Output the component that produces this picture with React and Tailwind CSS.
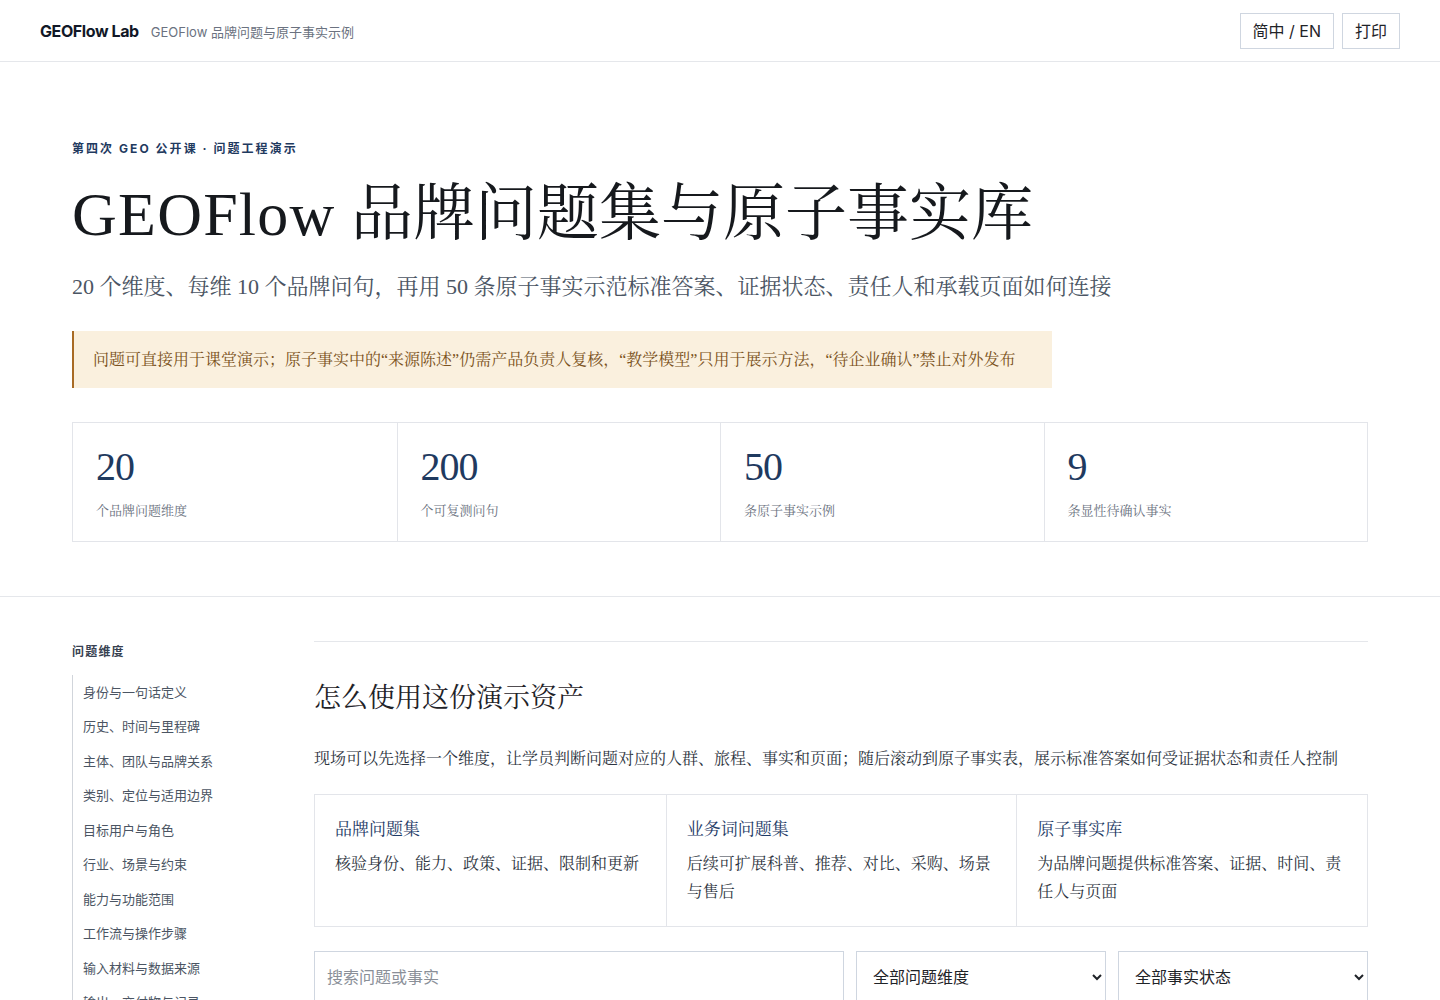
import React, { useState } from "react";

const serif = "font-['Liberation_Serif','Noto_Serif_CJK_SC','Noto_Sans_CJK_SC',serif]";
const sans = "font-['Inter','Noto_Sans_CJK_SC',sans-serif]";

const stats = [
  { value: "20", label: "个品牌问题维度" },
  { value: "200", label: "个可复测问句" },
  { value: "50", label: "条原子事实示例" },
  { value: "9", label: "条显性待确认事实" },
];

const dimensions = [
  "身份与一句话定义",
  "历史、时间与里程碑",
  "主体、团队与品牌关系",
  "类别、定位与适用边界",
  "目标用户与角色",
  "行业、场景与约束",
  "能力与功能范围",
  "工作流与操作步骤",
  "输入材料与数据来源",
  "输出、交付物与记录",
];

const assets = [
  { title: "品牌问题集", text: "核验身份、能力、政策、证据、限制和更新" },
  { title: "业务词问题集", text: "后续可扩展科普、推荐、对比、采购、场景与售后" },
  { title: "原子事实库", text: "为品牌问题提供标准答案、证据、时间、责任人与页面" },
];

export default function App() {
  const [query, setQuery] = useState("");

  return (
    <div className={`min-h-screen w-full bg-white text-[#1f2328] ${sans}`}>
      {/* top bar */}
      <header className="h-[62px] border-b border-[#e5e7eb] px-10 flex items-center justify-between">
        <div className="flex items-baseline gap-3">
          <span className="text-[16px] font-bold text-[#111827] tracking-tight">GEOFlow Lab</span>
          <span className="text-[13px] text-[#6b7280]">GEOFlow 品牌问题与原子事实示例</span>
        </div>
        <div className="flex items-center gap-2">
          <button className="h-[36px] px-[12px] border border-[#cfd6e0] text-[16px] text-[#1f2328]">
            简中 / EN
          </button>
          <button className="h-[36px] px-[12px] border border-[#cfd6e0] text-[16px] text-[#1f2328]">
            打印
          </button>
        </div>
      </header>

      {/* hero */}
      <section className="border-b border-[#e5e7eb] px-[72px] pt-[78px] pb-[54px]">
        <p className="text-[12px] font-bold tracking-[0.17em] text-[#1f3a5f]">
          第四次 GEO 公开课 · 问题工程演示
        </p>
        <h1 className={`${serif} mt-[20px] text-[62px] leading-[72px] text-[#16191d]`}>
          <span className="tracking-[0.02em]">GEOFlow</span> 品牌问题集与原子事实库
        </h1>
        <p className={`${serif} mt-[20px] text-[22px] text-[#4b5563]`}>
          20 个维度、每维 10 个品牌问句，再用 50 条原子事实示范标准答案、证据状态、责任人和承载页面如何连接
        </p>
        <div className="mt-[28px] w-[980px] bg-[#faf0de] border-l-2 border-[#a86b25] px-[19px] py-[16px]">
          <p className={`${serif} text-[16px] leading-[25px] whitespace-nowrap text-[#7a5220]`}>
            问题可直接用于课堂演示；原子事实中的“来源陈述”仍需产品负责人复核，“教学模型”只用于展示方法，“待企业确认”禁止对外发布
          </p>
        </div>
        <div className="mt-[34px] grid grid-cols-4 border border-[#e3e5ea]">
          {stats.map((s, i) => (
            <div
              key={s.value}
              className={`h-[118px] px-[23px] pt-[20px] ${i > 0 ? "border-l border-[#e3e5ea]" : ""}`}
            >
              <div className={`${serif} text-[40px] leading-[48px] text-[#1f3a5f] tracking-tight`}>{s.value}</div>
              <div className={`${serif} mt-[10px] text-[13px] text-[#6b7280]`}>{s.label}</div>
            </div>
          ))}
        </div>
      </section>

      {/* body */}
      <section className="px-[72px] pt-[44px] grid grid-cols-[218px_1fr] gap-6">
        <aside className="pt-[2px]">
          <h3 className="text-[12px] font-bold tracking-[0.1em] text-[#374151]">问题维度</h3>
          <ul className="mt-[14px] border-l border-[#d1d5db]">
            {dimensions.map((d) => (
              <li key={d} className="pl-[10px] h-[34.5px] flex items-center text-[13px] text-[#4b5563]">
                {d}
              </li>
            ))}
          </ul>
        </aside>

        <main className="border-t border-[#e5e7eb]">
          <h2 className={`${serif} mt-[36px] text-[27px] text-[#1f2328]`}>怎么使用这份演示资产</h2>
          <p className={`${serif} mt-[28px] text-[16px] text-[#2d3440]`}>
            现场可以先选择一个维度，让学员判断问题对应的人群、旅程、事实和页面；随后滚动到原子事实表，展示标准答案如何受证据状态和责任人控制
          </p>
          <div className="mt-[23px] grid grid-cols-3 border border-[#e3e5ea]">
            {assets.map((a, i) => (
              <div
                key={a.title}
                className={`h-[131px] px-[20px] pt-[22px] ${i > 0 ? "border-l border-[#e3e5ea]" : ""}`}
              >
                <div className={`${serif} text-[17px] text-[#1d3a66]`}>{a.title}</div>
                <div className={`${serif} mt-[8px] text-[16px] leading-[28px] text-[#2d3440]`}>{a.text}</div>
              </div>
            ))}
          </div>
          <div className="mt-[24px] grid grid-cols-[1fr_250px_250px] gap-3">
            <input
              value={query}
              onChange={(e) => setQuery(e.target.value)}
              placeholder="搜索问题或事实"
              className="h-[52px] border border-[#cfd6e0] px-3 text-[16px] placeholder:text-[#8a8f98] outline-none"
            />
            <select className="h-[52px] border border-[#cfd6e0] px-3 text-[16px] text-[#1f2328] bg-white">
              <option>全部问题维度</option>
            </select>
            <select className="h-[52px] border border-[#cfd6e0] px-3 text-[16px] text-[#1f2328] bg-white">
              <option>全部事实状态</option>
            </select>
          </div>
        </main>
      </section>
    </div>
  );
}
